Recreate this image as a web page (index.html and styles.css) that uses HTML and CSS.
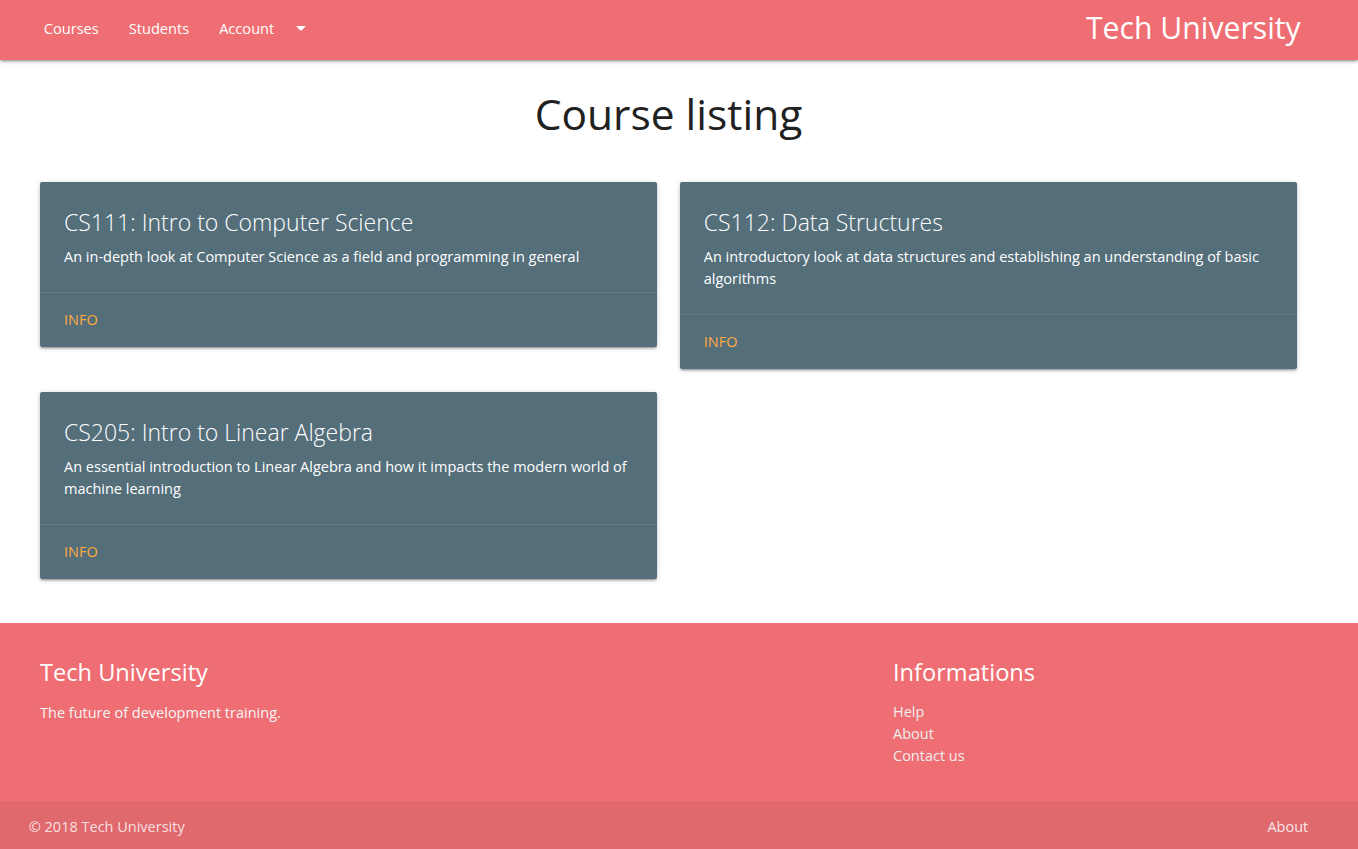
FILE: index.html
```html
<!DOCTYPE html>
<html lang="en">
<head>
<meta charset="utf-8">
<title>Tech University</title>
<link rel="stylesheet" href="styles.css">
</head>
<body>
<nav class="navbar">
  <div class="container nav-wrapper">
    <ul class="nav-links">
      <li><a href="#" class="nav-link">Courses</a></li>
      <li><a href="#" class="nav-link">Students</a></li>
      <li><a href="#" class="nav-link dropdown-trigger">Account<svg class="drop-icon" viewBox="0 0 24 24" width="24" height="24"><path d="M7 10l5 5 5-5z" fill="#fff"/></svg></a></li>
    </ul>
    <a href="#" class="brand-logo">Tech University</a>
  </div>
</nav>

<main class="main">
  <div class="container padded">
    <h1 class="page-title">Course listing</h1>
    <div class="card-grid">
      <div class="card">
        <div class="card-content">
          <span class="card-title">CS111: Intro to Computer Science</span>
          <p class="card-text">An in-depth look at Computer Science as a field and programming in general</p>
        </div>
        <div class="card-action"><a href="#" class="card-link">Info</a></div>
      </div>
      <div class="card">
        <div class="card-content">
          <span class="card-title">CS112: Data Structures</span>
          <p class="card-text">An introductory look at data structures and establishing an understanding of basic algorithms</p>
        </div>
        <div class="card-action"><a href="#" class="card-link">Info</a></div>
      </div>
      <div class="card">
        <div class="card-content">
          <span class="card-title">CS205: Intro to Linear Algebra</span>
          <p class="card-text">An essential introduction to Linear Algebra and how it impacts the modern world of machine learning</p>
        </div>
        <div class="card-action"><a href="#" class="card-link">Info</a></div>
      </div>
    </div>
  </div>
</main>

<footer class="page-footer">
  <div class="footer-main">
    <div class="container footer-row">
      <div class="footer-col footer-brand">
        <h5 class="footer-title">Tech University</h5>
        <p class="footer-text">The future of development training.</p>
      </div>
      <div class="footer-col footer-info">
        <h5 class="footer-title">Informations</h5>
        <ul class="footer-links">
          <li><a href="#" class="footer-link">Help</a></li>
          <li><a href="#" class="footer-link">About</a></li>
          <li><a href="#" class="footer-link">Contact us</a></li>
        </ul>
      </div>
    </div>
  </div>
  <div class="footer-copyright">
    <div class="container copyright-row">
      <span>© 2018 Tech University</span>
      <a href="#" class="copyright-link">About</a>
    </div>
  </div>
</footer>
</body>
</html>
```
FILE: styles.css
```css
* { box-sizing: border-box; }

html, body {
  margin: 0;
  padding: 0;
}

body {
  font-family: "Open Sans", "Noto Sans", sans-serif;
  font-size: 14.5px;
  line-height: 22px;
  color: rgba(0, 0, 0, 0.87);
  background: #fff;
}

a { text-decoration: none; }

.container {
  margin-left: 28.75px;
  width: 1279.5px;
}

.container.padded {
  padding: 0 11.25px;
}

/* NAV */
.navbar {
  height: 60px;
  background: #ef6e73;
  box-shadow: 0 2px 2px 0 rgba(0,0,0,0.14), 0 3px 1px -2px rgba(0,0,0,0.12), 0 1px 5px 0 rgba(0,0,0,0.2);
  position: relative;
  z-index: 2;
}

.nav-wrapper {
  display: flex;
  justify-content: space-between;
  align-items: flex-start;
  height: 56px;
}

.nav-links {
  display: flex;
  list-style: none;
  margin: 0;
  padding: 0;
}

.nav-link {
  display: flex;
  align-items: center;
  height: 56px;
  padding: 0 15px;
  color: #fff;
  font-size: 14.6px;
}

.drop-icon {
  margin-left: 15px;
  display: block;
}

.brand-logo {
  color: #fff;
  font-size: 30.2px;
  line-height: 56px;
  margin-right: 7.5px;
}

/* MAIN */
.main {
  padding-bottom: 44px;
}

.page-title {
  margin: 29.5px 0 44.5px;
  font-size: 42.5px;
  line-height: 48px;
  font-weight: 400;
  text-align: center;
  color: #212121;
}

.card-grid {
  display: grid;
  grid-template-columns: 1fr 1fr;
  column-gap: 22.5px;
  row-gap: 23px;
  align-items: start;
}

.card {
  background: #546e7a;
  border-radius: 2px;
  box-shadow: 0 2px 2px 0 rgba(0,0,0,0.14), 0 3px 1px -2px rgba(0,0,0,0.12), 0 1px 5px 0 rgba(0,0,0,0.2);
  color: #fff;
}

.card-content {
  padding: 24px;
}

.card-title {
  display: block;
  font-size: 23px;
  line-height: 32px;
  font-weight: 300;
  margin-bottom: 8px;
}

.card-text {
  margin: 0;
  font-size: 14.5px;
  line-height: 22px;
}

.card-action {
  border-top: 1px solid rgba(160, 160, 160, 0.2);
  padding: 16px 24px;
}

.card-link {
  color: #ffab40;
  text-transform: uppercase;
  font-size: 14.5px;
  line-height: 22px;
}

/* FOOTER */
.page-footer {
  background: #ef6e73;
  color: #fff;
}

.footer-main {
  height: 178px;
  padding-top: 20px;
}

.footer-row {
  display: flex;
}

.footer-col {
  padding: 0 11.25px;
}

.footer-brand {
  flex: 0 0 50%;
}

.footer-info {
  flex: 0 0 33.333%;
  margin-left: 16.6667%;
}

.footer-title {
  margin: 16.4px 0 0;
  font-size: 23.6px;
  line-height: 27px;
  font-weight: 400;
  color: #fff;
}

.footer-text {
  margin: 16px 0 0;
  color: #f5f5f5;
}

.footer-links {
  list-style: none;
  margin: 15px 0 0;
  padding: 0;
}

.footer-link {
  color: #eeeeee;
}

.footer-copyright {
  height: 48px;
  background: #e0696e;
  color: rgba(255, 255, 255, 0.8);
}

.copyright-row {
  height: 48px;
  padding-top: 3px;
  display: flex;
  align-items: center;
  justify-content: space-between;
}

.copyright-link {
  color: rgba(255, 255, 255, 0.85);
}
```
